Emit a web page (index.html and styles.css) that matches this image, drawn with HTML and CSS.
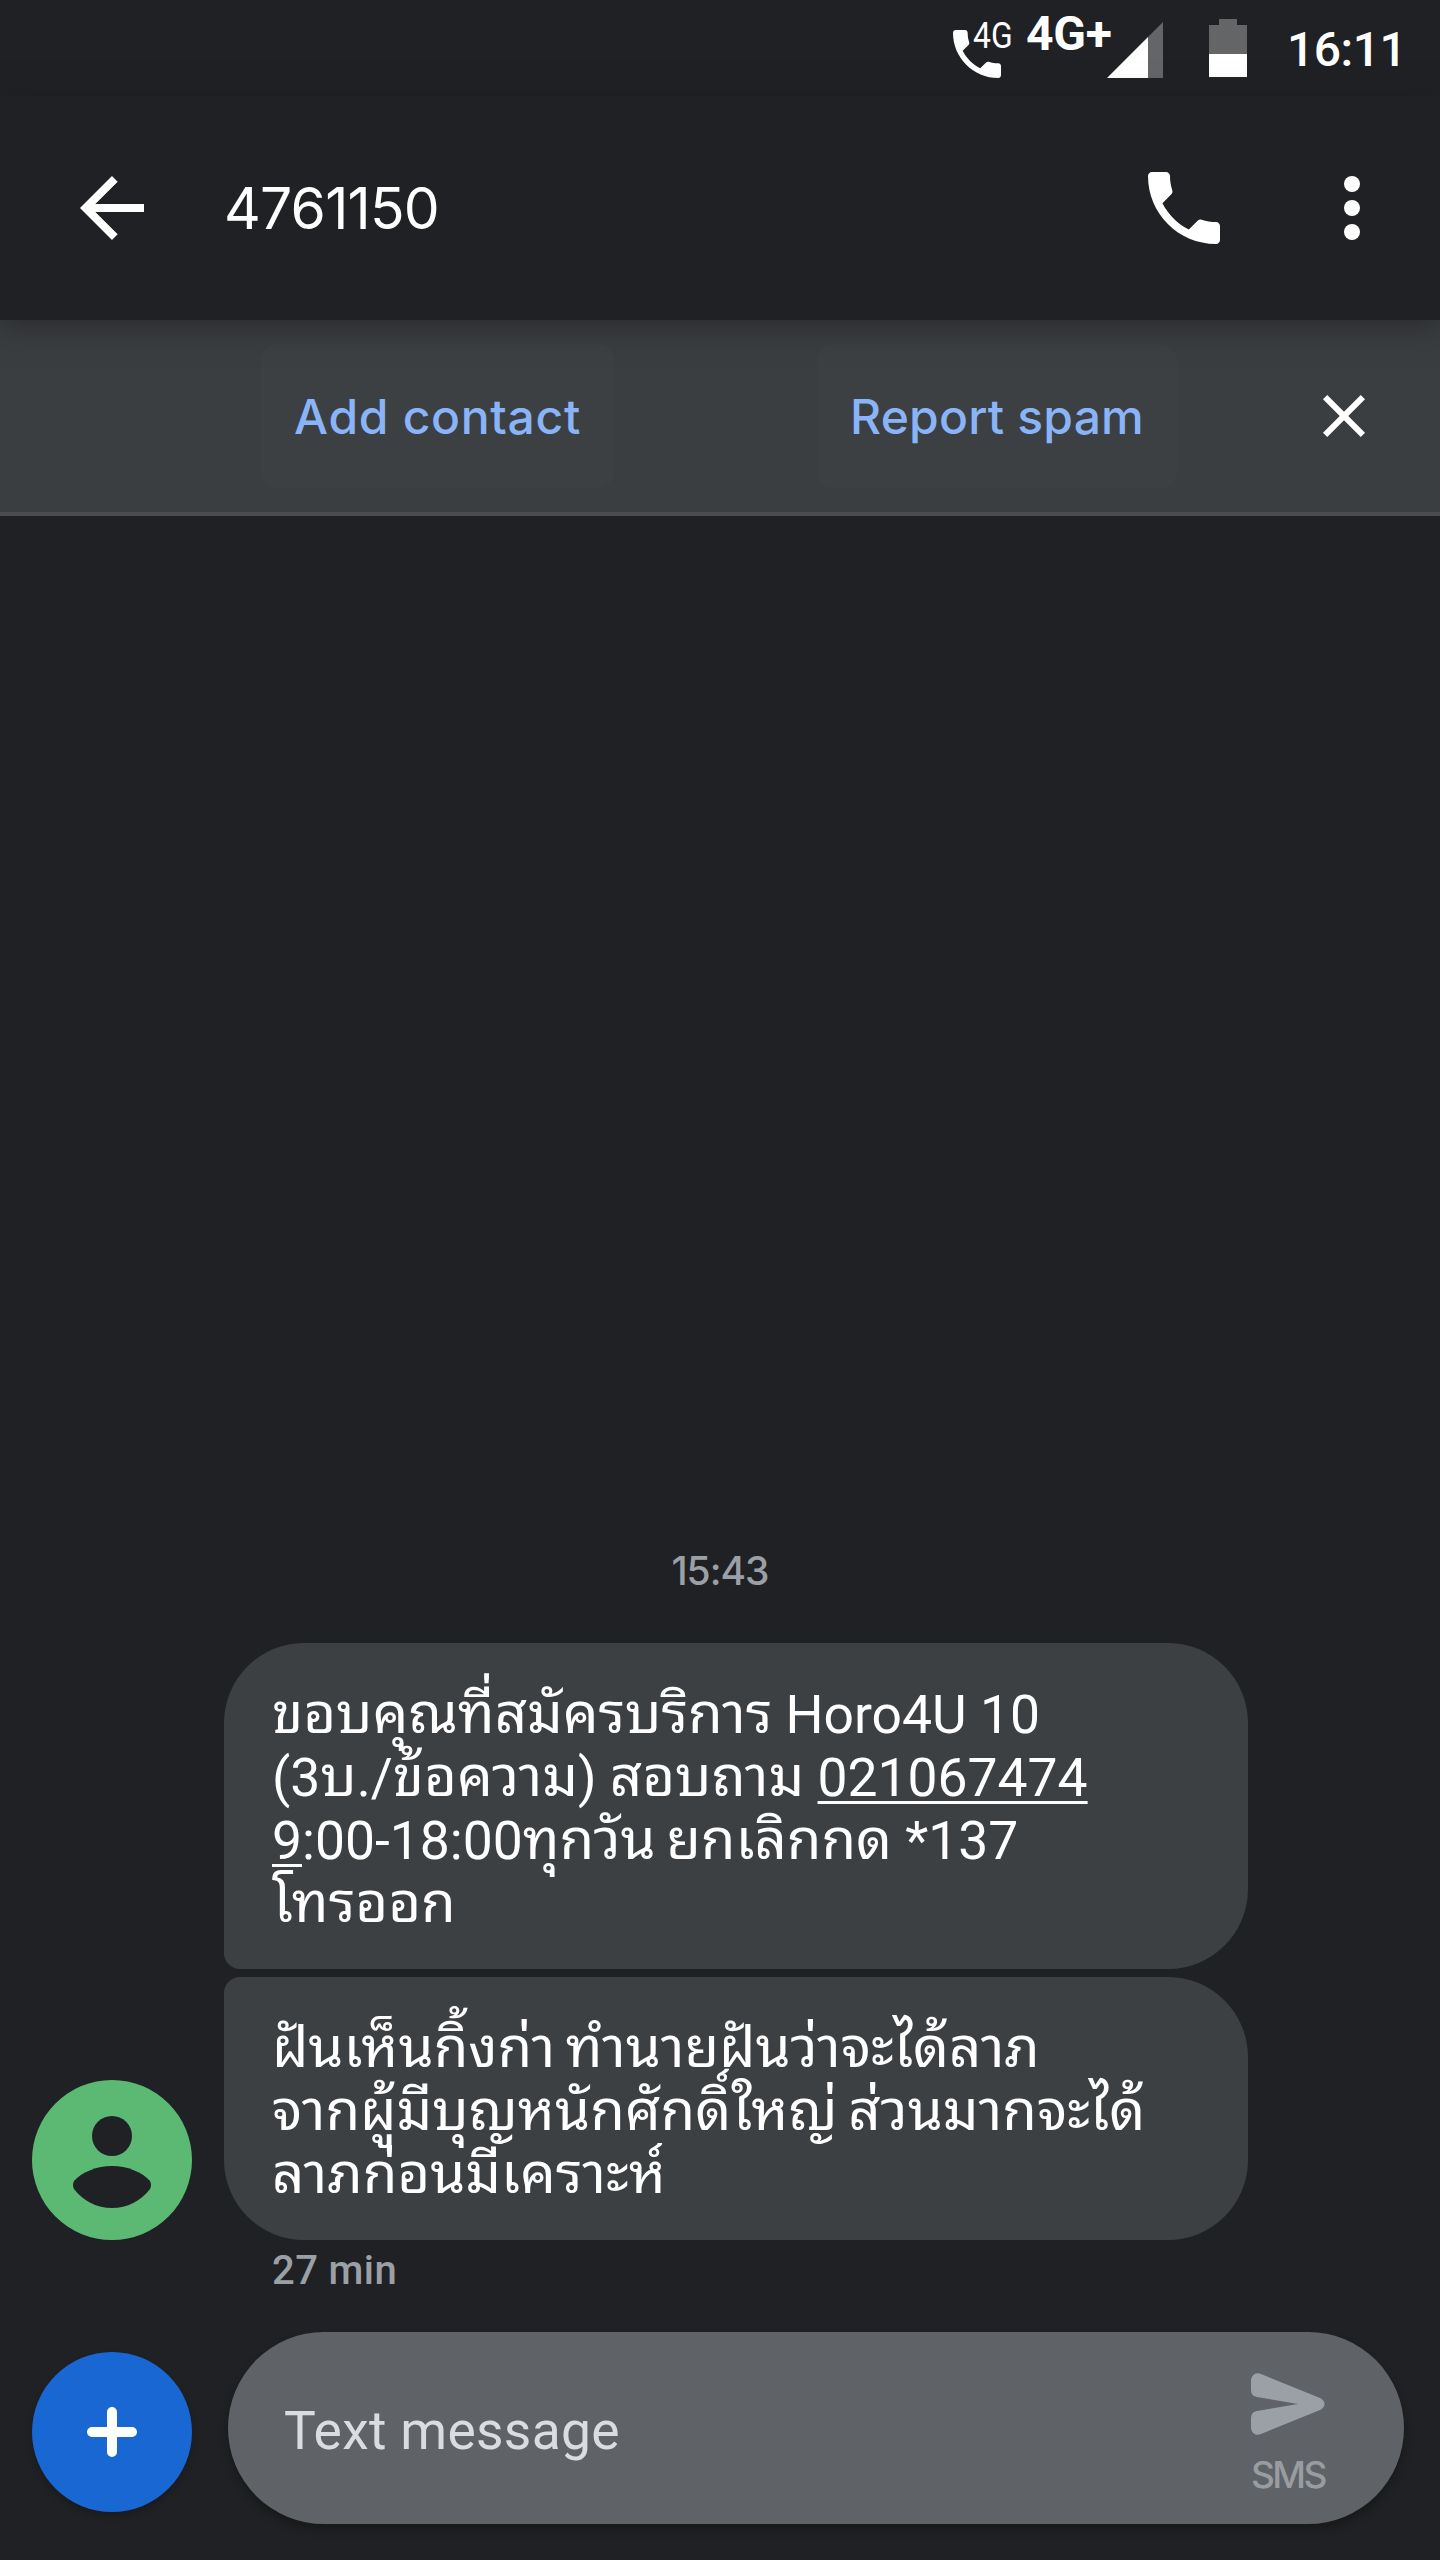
FILE: index.html
```html
<!DOCTYPE html>
<html lang="th">
<head>
    <meta charset="UTF-8">
    <title>4761150</title>
    <link rel="stylesheet" href="styles.css">
</head>
<body>

<div class="status-bar">
    <div class="volte">
        <svg class="volte-phone" viewBox="3 3 18 18"><path d="M6.62 10.79c1.44 2.83 3.76 5.14 6.59 6.59l2.2-2.2c.27-.27.67-.36 1.02-.24 1.12.37 2.33.57 3.57.57.55 0 1 .45 1 1V20c0 .55-.45 1-1 1-9.39 0-17-7.61-17-17 0-.55.45-1 1-1h3.5c.55 0 1 .45 1 1 0 1.25.2 2.45.57 3.57.11.35.03.74-.25 1.02z"/></svg>
        <span class="volte-label">4G</span>
    </div>
    <span class="network">4G+</span>
    <svg class="signal" viewBox="0 0 56 56">
        <path class="dim" d="M56 0v56H41V15z"/>
        <path d="M41 15v41H0z"/>
    </svg>
    <svg class="battery" viewBox="0 0 38 58">
        <path class="dim" d="M10 0h18v6h10v29H0V6h10z"/>
        <path d="M0 35h38v23H0z"/>
    </svg>
    <span class="clock">16:11</span>
</div>

<header class="app-bar">
    <svg class="icon" viewBox="0 0 24 24"><path d="M20 11H7.83l5.59-5.59L12 4l-8 8 8 8 1.41-1.41L7.83 13H20z"/></svg>
    <h1 class="title">4761150</h1>
    <svg class="icon" viewBox="0 0 24 24"><path d="M4 3h3.5c.55 0 1 .45 1 1 0 1.25.2 2.45.57 3.57.11.35.03.74-.25 1.02L6.62 10.79c1.44 2.83 3.76 5.14 6.59 6.59l2.2-2.2c.27-.27.67-.36 1.02-.24 1.12.37 2.33.57 3.57.57.55 0 1 .45 1 1V20c0 .55-.45 1-1 1C10.61 21 3 13.39 3 4c0-.55.45-1 1-1z"/></svg>
    <svg class="icon more" viewBox="0 0 24 24"><circle cx="12" cy="6" r="2"/><circle cx="12" cy="12" r="2"/><circle cx="12" cy="18" r="2"/></svg>
</header>

<!-- Unknown sender banner -->
<div class="banner">
    <button class="banner-btn add">Add contact</button>
    <button class="banner-btn report">Report spam</button>
    <svg class="close" viewBox="0 0 24 24"><path d="M19 6.41L17.59 5 12 10.59 6.41 5 5 6.41 10.59 12 5 17.59 6.41 19 12 13.41 17.59 19 19 17.59 13.41 12z"/></svg>
</div>

<main class="thread">
    <div class="time">15:43</div>
    <div class="messages">
        <svg class="avatar" viewBox="0 0 160 160">
            <circle class="avatar-bg" cx="80" cy="80" r="80"/>
            <circle cx="80" cy="56" r="20"/>
            <path d="M42 101c8-9 23-15 38-15s30 6 38 15q2 4 0 8c-9 12-23 19-38 19s-29-7-38-19q-2-4 0-8z"/>
        </svg>
        <div class="bubbles">
            <div class="bubble first">
                <p><span class="th">ขอบคุณที่สมัครบริการ</span> Horo4U 10</p>
                <p>(3<span class="th">บ</span>./<span class="th">ข้อความ</span>) <span class="th">สอบถาม</span> <u>021067474</u></p>
                <p><u>9</u>:00-18:00<span class="th">ทุกวัน ยกเลิกกด</span> *137</p>
                <p><span class="th">โทรออก</span></p>
            </div>
            <div class="bubble last">
                <p><span class="th">ฝันเห็นกิ้งก่า ทำนายฝันว่าจะได้ลาภ</span></p>
                <p><span class="th">จากผู้มีบุญหนักศักดิ์ใหญ่ ส่วนมากจะได้</span></p>
                <p><span class="th">ลาภก่อนมีเคราะห์</span></p>
            </div>
        </div>
    </div>
    <div class="ago">27 min</div>
</main>

<footer class="composer">
    <svg class="plus" viewBox="0 0 160 160"><path d="M80 60v40M60 80h40"/></svg>
    <div class="field">
        <span class="placeholder">Text message</span>
        <div class="send">
            <svg class="send-icon" viewBox="0 0 74 62"><path d="M0 8C0 2 5-1.500 10 1L69 25c6 3 6 9 0 12L10 61C5 63.500 0 60 0 54V45q0-6 6-7l41-7L6 24Q0 23 0 17z"/></svg>
            <span class="send-label">SMS</span>
        </div>
    </div>
</footer>

</body>
</html>
```
FILE: styles.css
```css
* {
    box-sizing: border-box;
}
body {
    margin: 0;
    width: 1440px;
    height: 2560px;
    display: flex;
    flex-direction: column;
    overflow: hidden;
    background-color: #202124;
    color: #fff;
    font-family: Roboto, "Noto Sans Thai", "Noto Sans", sans-serif;
}
svg {
    display: block;
    flex: none;
    fill: #fff;
}
p, h1 {
    margin: 0;
    font-weight: 400;
}

/* Status bar */
.status-bar {
    display: flex;
    height: 96px;
    padding-right: 39px;
    justify-content: flex-end;
    align-items: flex-start;
    white-space: nowrap;
}
.volte {
    display: flex;
    width: 73px;
    padding-top: 22px;
}
.volte-phone {
    width: 48px;
    height: 48px;
    margin-top: 8px;
}
.volte-label {
    margin-left: -28px;
    font-size: 37px;
    line-height: 28px;
    transform: scaleX(.86);
    transform-origin: left;
}
.network {
    width: 81px;
    padding-top: 15px;
    font-size: 48px;
    font-weight: 700;
    line-height: 37px;
    letter-spacing: -.3px;
}
.signal {
    width: 56px;
    height: 56px;
    margin-top: 22px;
}
.battery {
    width: 38px;
    height: 58px;
    margin: 19px 40px 0 46px;
}
.dim {
    fill: #646567;
}
.clock {
    width: 114px;
    padding-top: 31px;
    font-size: 48px;
    font-weight: 500;
    line-height: 37px;
    letter-spacing: -.5px;
}

/* Toolbar */
.app-bar {
    position: relative;
    display: flex;
    height: 224px;
    padding: 64px 40px 0 64px;
    background-color: #202124;
    box-shadow: 0 6px 28px rgba(32, 28, 30, .6);
}
.icon {
    width: 96px;
    height: 96px;
}
.more {
    margin-left: 72px;
}
.title {
    flex: 1;
    padding-left: 64px;
    font-family: Inter, sans-serif;
    font-size: 57px;
    line-height: 98px;
    letter-spacing: -.8px;
}

.banner {
    display: flex;
    height: 196px;
    padding: 24px 60px 0 261px;
    background-color: #3a3e41;
    border-bottom: 4px solid #4a4c50;
}
.banner-btn {
    height: 144px;
    padding: 0;
    border: 0;
    border-radius: 16px;
    background-color: #3c4043;
    color: #8ab4f8;
    font-family: Inter, sans-serif;
    font-size: 48px;
    font-weight: 500;
    white-space: nowrap;
}
.add {
    width: 353px;
    letter-spacing: .7px;
}
.report {
    width: 360px;
    margin-left: 203px;
    letter-spacing: .2px;
}
.close {
    width: 72px;
    height: 72px;
    margin: 36px 0 0 auto;
}

/* Conversation */
.thread {
    flex: 1;
    display: flex;
    flex-direction: column;
    justify-content: flex-end;
}
.time {
    margin-bottom: 47px;
    color: #9aa0a6;
    font-family: Inter, sans-serif;
    font-size: 39px;
    font-weight: 500;
    line-height: 50px;
    letter-spacing: -1px;
    text-align: center;
}
.messages {
    display: flex;
    align-items: flex-end;
    gap: 32px;
    padding-left: 32px;
}
.avatar {
    width: 160px;
    height: 160px;
    fill: #202124;
}
.avatar-bg {
    fill: #5bb974;
}
.bubbles {
    display: flex;
    flex-direction: column;
    gap: 8px;
    width: 1024px;
}
.bubble {
    padding: 40px 48px 34px;
    border-radius: 80px;
    background-color: #3c4043;
    font-size: 53.4px;
    line-height: 63px;
    white-space: nowrap;
}
.bubble p {
    height: 63px;
}
.bubble u {
    text-decoration-thickness: 3px;
    text-underline-offset: 5px;
    text-decoration-skip-ink: none;
}
/* Thai glyphs run smaller than Roboto */
.th {
    font-family: "Noto Sans Thai Looped", "Noto Looped Thai", "Noto Sans Thai UI", "Noto Sans Thai", Roboto, sans-serif;
    font-size: 56.3px;
    line-height: 1px;
    word-spacing: -4px;
}
.first {
    border-bottom-left-radius: 16px;
}
.last {
    border-top-left-radius: 16px;
}
.ago {
    height: 92px;
    padding: 6px 0 0 272px;
    color: #9aa0a6;
    font-size: 40px;
    font-weight: 500;
    line-height: 50px;
    letter-spacing: .4px;
}

/* Composer */
.composer {
    display: flex;
    height: 228px;
    gap: 36px;
    padding: 0 36px 0 32px;
}
.plus {
    width: 160px;
    height: 160px;
    margin-top: 20px;
    border-radius: 50%;
    background-color: #1967d2;
    box-shadow: 0 4px 6px rgba(0, 0, 0, .2);
    fill: none;
    stroke: #fff;
    stroke-width: 10;
    stroke-linecap: round;
}
.field {
    flex: 1;
    display: flex;
    justify-content: space-between;
    height: 192px;
    padding: 0 78px 0 56px;
    border-radius: 96px;
    background-color: #5f6368;
    box-shadow: 0 6px 8px rgba(0, 0, 0, .25);
}
.placeholder {
    color: #dadce0;
    font-size: 53.4px;
    line-height: 197px;
    letter-spacing: .3px;
}
.send {
    display: flex;
    flex-direction: column;
    align-items: center;
    width: 76px;
    padding-top: 41px;
    color: #999ca1;
}
.send-icon {
    width: 74px;
    height: 62px;
    fill: #9aa0a6;
}
.send-label {
    margin-top: 20px;
    font-family: Inter, sans-serif;
    font-size: 37px;
    font-weight: 500;
    line-height: 40px;
    letter-spacing: -2.500px;
}
```
